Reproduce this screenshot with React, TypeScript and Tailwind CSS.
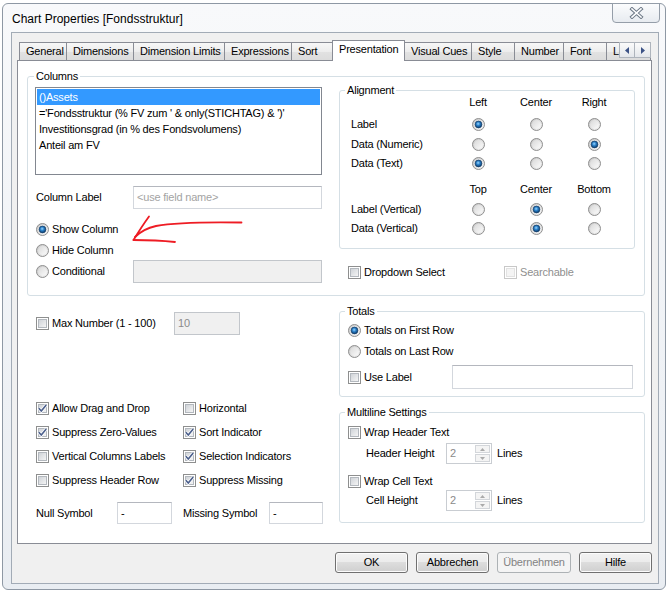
import type { ReactNode } from 'react';

// shared svg gradients for the win7 style radios / checkboxes
function Defs() {
    return (
        <svg width="0" height="0" className="block h-0 w-0">
            <defs>
                <linearGradient id="radioFill" x1="0" y1="0" x2="1" y2="1">
                    <stop offset="0" stopColor="#c4c4c4" />
                    <stop offset="1" stopColor="#f6f6f6" />
                </linearGradient>
                <linearGradient id="radioInner" x1="0" y1="0" x2="1" y2="1">
                    <stop offset="0" stopColor="#d9d9d9" />
                    <stop offset="1" stopColor="#fbfbfb" />
                </linearGradient>
                <radialGradient id="radioDot" cx="0.45" cy="0.4" r="0.6">
                    <stop offset="0" stopColor="#9ad6ff" />
                    <stop offset="0.45" stopColor="#2a80c8" />
                    <stop offset="1" stopColor="#0b3866" />
                </radialGradient>
                <linearGradient id="checkFill" x1="0" y1="0" x2="1" y2="1">
                    <stop offset="0" stopColor="#cdd1d6" />
                    <stop offset="1" stopColor="#f7f7f7" />
                </linearGradient>
            </defs>
        </svg>
    );
}

function Radio({ on = false }: { on?: boolean }) {
    return (
        <svg width="13" height="13" viewBox="0 0 13 13" className="shrink-0">
            <circle cx="6.5" cy="6.5" r="6" fill="url(#radioFill)" stroke="#8f8f8f" />
            <circle cx="6.5" cy="6.5" r="4.4" fill="url(#radioInner)" />
            {on && <circle cx="6.5" cy="6.5" r="3.4" fill="url(#radioDot)" stroke="#153f6c" strokeWidth="0.7" />}
        </svg>
    );
}

function Check({ on = false, disabled = false }: { on?: boolean; disabled?: boolean }) {
    return (
        <svg width="13" height="13" viewBox="0 0 13 13" className="shrink-0">
            <rect x="0.5" y="0.5" width="12" height="12" fill="#fff" stroke={disabled ? '#c8c8c8' : '#8e8f8f'} />
            <rect
                x="2.5"
                y="2.5"
                width="8"
                height="8"
                fill={disabled ? '#f4f4f4' : 'url(#checkFill)'}
                stroke={disabled ? '#e2e2e2' : '#b3b8be'}
            />
            {on && <path d="M2.8 6.3 L5.3 9.1 L10.2 3" fill="none" stroke="#fff" strokeWidth="3" />}
            {on && <path d="M2.8 6.3 L5.3 9.1 L10.2 3" fill="none" stroke="#4b5f8c" strokeWidth="1.6" />}
        </svg>
    );
}

function Input({ className, children, disabled = false }: { className: string; children?: ReactNode; disabled?: boolean }) {
    return (
        <div
            className={`flex shrink-0 items-center border pl-[3px] ${disabled
                ? 'border-[#c2c6cb] bg-[#f0f0f0] text-[#8a8a8a]'
                : 'border-[#d3d7dd] border-t-[#b4b7be] bg-white'
                } ${className}`}
        >
            {children}
        </div>
    );
}

function Spinner() {
    return (
        <div className="flex h-[21px] w-[46px] shrink-0 border border-[#c9cdd2] bg-white">
            <span className="flex-1 pl-[3px] pt-[3px] text-[#8a8a8a]">2</span>
            <div className="flex w-[17px] flex-col gap-[1px] p-[1px]">
                <div className="flex flex-1 items-center justify-center border border-[#d3d6da] bg-[#f4f4f4]">
                    <svg width="5" height="3" viewBox="0 0 5 3">
                        <path d="M0 3 L2.5 0 L5 3Z" fill="#aaaaaa" />
                    </svg>
                </div>
                <div className="flex flex-1 items-center justify-center border border-[#d3d6da] bg-[#f4f4f4]">
                    <svg width="5" height="3" viewBox="0 0 5 3">
                        <path d="M0 0 L2.5 3 L5 0Z" fill="#aaaaaa" />
                    </svg>
                </div>
            </div>
        </div>
    );
}

const tabs: { label: string; w: string; active?: boolean }[] = [
    { label: 'General', w: 'w-[48px]' },
    { label: 'Dimensions', w: 'w-[68px]' },
    { label: 'Dimension Limits', w: 'w-[92px]' },
    { label: 'Expressions', w: 'w-[68px]' },
    { label: 'Sort', w: 'w-[42px]' },
    { label: 'Presentation', w: 'w-[73px]', active: true },
    { label: 'Visual Cues', w: 'w-[68px]' },
    { label: 'Style', w: 'w-[44px]' },
    { label: 'Number', w: 'w-[50px]' },
    { label: 'Font', w: 'w-[44px]' },
];

function TabStrip() {
    return (
        <div className="relative flex h-[20px] w-[635px] shrink-0 items-end pl-[2px]">
            {tabs.map((t, i) =>
                t.active ? (
                    <div
                        key={t.label}
                        className={`${t.w} relative z-10 -mb-[1px] -ml-[1px] flex h-[21px] shrink-0 items-center whitespace-nowrap border border-b-0 border-[#898c95] bg-white pb-[3px] pl-[6px]`}
                    >
                        {t.label}
                    </div>
                ) : (
                    <div
                        key={t.label}
                        className={`${t.w} ${i === 0 ? '' : '-ml-[1px]'} flex h-[18px] shrink-0 items-center whitespace-nowrap border border-b-0 border-[#898c95] bg-[linear-gradient(to_bottom,#f7f7f7_0%,#ededed_50%,#e2e2e2_50%,#dcdcdc_100%)] pl-[6px]`}
                    >
                        {t.label}
                    </div>
                )
            )}
            <div className="-ml-[1px] flex h-[18px] w-[45px] shrink-0 items-center overflow-hidden whitespace-nowrap border border-b-0 border-[#898c95] bg-[linear-gradient(to_bottom,#f7f7f7_0%,#ededed_50%,#e2e2e2_50%,#dcdcdc_100%)] pl-[6px]">
                Layout
            </div>
            {/* scroll arrows sit over the clipped tab */}
            <div className="absolute right-[1px] top-[2px] z-20 flex">
                <div className="flex h-[16px] w-[16px] items-center justify-center border border-[#aeb4bc] bg-[linear-gradient(to_bottom,#fbfbfb,#e4e7eb)]">
                    <svg width="4" height="7" viewBox="0 0 4 7">
                        <path d="M4 0 L0 3.5 L4 7Z" fill="#3c5286" />
                    </svg>
                </div>
                <div className="flex h-[16px] w-[16px] items-center justify-center border border-l-0 border-[#aeb4bc] bg-[linear-gradient(to_bottom,#fbfbfb,#e4e7eb)]">
                    <svg width="4" height="7" viewBox="0 0 4 7">
                        <path d="M0 0 L4 3.5 L0 7Z" fill="#3c5286" />
                    </svg>
                </div>
            </div>
        </div>
    );
}

function AlignRow({ label, sel, h }: { label: string; sel: number; h: string }) {
    return (
        <div className={`flex ${h} items-center`}>
            <span className="w-[98px]">{label}</span>
            {[0, 1, 2].map((i) => (
                <div key={i} className="flex w-[58px] justify-center">
                    <Radio on={i === sel} />
                </div>
            ))}
        </div>
    );
}

function AlignHead({ cols, className }: { cols: string[]; className: string }) {
    return (
        <div className={`flex items-center ${className}`}>
            <span className="w-[98px]" />
            {cols.map((c) => (
                <span key={c} className="w-[58px] text-center">
                    {c}
                </span>
            ))}
        </div>
    );
}

function ColumnsGroup() {
    const rows = [
        "()Assets",
        "='Fondsstruktur (% FV zum ' & only(STICHTAG) & ')'",
        'Investitionsgrad (in % des Fondsvolumens)',
        'Anteil am FV',
    ];
    return (
        <fieldset className="w-[618px] rounded-[3px] border border-[#d5dfe5]">
            <legend className="ml-[6px] px-[2px] leading-[13px]">Columns</legend>
            <div className="flex h-[212px]">
                {/* left: list + label + visibility */}
                <div className="flex w-[294px] flex-col pl-[7px]">
                    <div className="mt-[4px] h-[88px] w-[287px] border border-[#828790] bg-white p-[1px]">
                        {rows.map((r, i) => (
                            <div
                                key={r}
                                className={`h-[16px] whitespace-nowrap pl-[2px] leading-[16px] ${i === 0 ? 'bg-[#3399ff] text-white' : ''}`}
                            >
                                {r}
                            </div>
                        ))}
                    </div>
                    <div className="mt-[11px] flex h-[23px] items-center">
                        <span className="w-[98px] pl-[1px]">Column Label</span>
                        <Input className="h-[23px] w-[189px] text-[#a3a3a3]">&lt;use field name&gt;</Input>
                    </div>
                    <div className="mt-[10px] flex h-[21px] items-center gap-[3px] pl-[1px]">
                        <Radio on />
                        <span>Show Column</span>
                    </div>
                    <div className="flex h-[20px] items-center gap-[3px] pl-[1px]">
                        <Radio />
                        <span>Hide Column</span>
                    </div>
                    <div className="flex h-[23px] items-center">
                        <div className="flex w-[98px] items-center gap-[3px] pl-[1px]">
                            <Radio />
                            <span>Conditional</span>
                        </div>
                        <Input disabled className="h-[23px] w-[189px]" />
                    </div>
                </div>

                {/* right: alignment */}
                <div className="ml-[17px] flex w-[296px] flex-col">
                    <fieldset className="mt-[1px] w-[296px] rounded-[3px] border border-[#d5dfe5] pb-[10px]">
                        <legend className="ml-[5px] px-[2px] leading-[13px]">Alignment</legend>
                        <div className="flex flex-col pl-[11px]">
                            <AlignHead cols={['Left', 'Center', 'Right']} className="h-[11px]" />
                            <div className="mt-[6px]" />
                            <AlignRow label="Label" sel={0} h="h-[20px]" />
                            <AlignRow label="Data (Numeric)" sel={2} h="h-[20px]" />
                            <AlignRow label="Data (Text)" sel={0} h="h-[19px]" />
                            <AlignHead cols={['Top', 'Center', 'Bottom']} className="mt-[10px] h-[12px]" />
                            <div className="mt-[5px]" />
                            <AlignRow label="Label (Vertical)" sel={1} h="h-[19px]" />
                            <AlignRow label="Data (Vertical)" sel={1} h="h-[19px]" />
                        </div>
                    </fieldset>
                    <div className="mt-[16px] flex h-[15px] items-center pl-[9px]">
                        <div className="flex w-[156px] items-center gap-[3px]">
                            <Check />
                            <span>Dropdown Select</span>
                        </div>
                        <div className="flex items-center gap-[3px] text-[#8f8f8f]">
                            <Check disabled />
                            <span>Searchable</span>
                        </div>
                    </div>
                </div>
            </div>
        </fieldset>
    );
}

const flags: { label: string; on: boolean }[] = [
    { label: 'Allow Drag and Drop', on: true },
    { label: 'Horizontal', on: false },
    { label: 'Suppress Zero-Values', on: true },
    { label: 'Sort Indicator', on: true },
    { label: 'Vertical Columns Labels', on: false },
    { label: 'Selection Indicators', on: true },
    { label: 'Suppress Header Row', on: false },
    { label: 'Suppress Missing', on: true },
];

function LowerLeft() {
    return (
        <div className="flex w-[312px] flex-col pl-[9px]">
            <div className="mt-[16px] flex h-[23px] items-center">
                <div className="flex w-[138px] items-center gap-[3px]">
                    <Check />
                    <span>Max Number (1 - 100)</span>
                </div>
                <Input disabled className="h-[23px] w-[66px]">
                    10
                </Input>
            </div>
            <div className="mt-[61px] grid grid-cols-[147px_1fr]">
                {flags.map((f) => (
                    <div key={f.label} className="flex h-[24px] items-center gap-[3px]">
                        <Check on={f.on} />
                        <span>{f.label}</span>
                    </div>
                ))}
            </div>
            <div className="mt-[10px] flex h-[22px] items-center">
                <span className="w-[81px]">Null Symbol</span>
                <Input className="h-[22px] w-[55px]">-</Input>
                <span className="ml-[11px] w-[86px]">Missing Symbol</span>
                <Input className="h-[22px] w-[54px]">-</Input>
            </div>
        </div>
    );
}

function LowerRight() {
    return (
        <div className="flex w-[306px] flex-col">
            <fieldset className="mt-[9px] rounded-[3px] border border-[#d5dfe5] pb-[7px] pl-[8px]">
                <legend className="ml-[-3px] px-[2px] leading-[13px]">Totals</legend>
                <div className="mt-[2px] flex h-[21px] items-center gap-[3px]">
                    <Radio on />
                    <span>Totals on First Row</span>
                </div>
                <div className="flex h-[21px] items-center gap-[3px]">
                    <Radio />
                    <span>Totals on Last Row</span>
                </div>
                <div className="mt-[3px] flex h-[24px] items-center">
                    <div className="flex w-[104px] items-center gap-[3px]">
                        <Check />
                        <span>Use Label</span>
                    </div>
                    <Input className="h-[24px] w-[181px]" />
                </div>
            </fieldset>
            <fieldset className="mt-[9px] rounded-[3px] border border-[#d5dfe5] pb-[11px] pl-[8px]">
                <legend className="ml-[-3px] px-[2px] leading-[13px]">Multiline Settings</legend>
                <div className="mt-[6px] flex h-[15px] items-center gap-[3px]">
                    <Check />
                    <span>Wrap Header Text</span>
                </div>
                <div className="mt-[3px] flex h-[21px] items-center pl-[18px]">
                    <span className="w-[80px]">Header Height</span>
                    <Spinner />
                    <span className="ml-[5px]">Lines</span>
                </div>
                <div className="mt-[10px] flex h-[15px] items-center gap-[3px]">
                    <Check />
                    <span>Wrap Cell Text</span>
                </div>
                <div className="mt-[1px] flex h-[21px] items-center pl-[18px]">
                    <span className="w-[80px]">Cell Height</span>
                    <Spinner />
                    <span className="ml-[5px]">Lines</span>
                </div>
            </fieldset>
        </div>
    );
}

function Button({ label, w, disabled = false }: { label: string; w: string; disabled?: boolean }) {
    return (
        <div
            className={`${w} flex h-[21px] items-center justify-center rounded-[3px] border ${disabled
                ? 'border-[#adb2b5] bg-[#f4f4f4] text-[#838383]'
                : 'border-[#707070] bg-[linear-gradient(to_bottom,#f2f2f2_0%,#ebebeb_50%,#dddddd_50%,#cfcfcf_100%)] shadow-[inset_0_0_0_1px_#fcfcfc]'
                }`}
        >
            {label}
        </div>
    );
}

export default function App() {
    return (
        <div className="relative h-[592px] w-[669px] bg-white pl-[2px] pt-[3px] font-['Liberation_Sans',Arial,sans-serif] text-[11px] leading-[13px] tracking-[-0.2px] text-black">
            <Defs />
            <div className="flex h-[587px] w-[664px] flex-col rounded-[6px] border border-[#8e98a4] bg-[linear-gradient(to_bottom,#f8f9fb,#e9edf2)] pb-[5px] pl-[8px] pr-[6px]">
                {/* title bar */}
                <div className="flex h-[28px] shrink-0 items-start justify-between">
                    <span className="ml-[1px] mt-[8px] text-[12px] leading-[14px] tracking-normal">Chart Properties [Fondsstruktur]</span>
                    <div className="-mr-[1px] -mt-[1px] flex h-[20px] w-[48px] items-center justify-center rounded-b-[4px] border border-[#959ea9] bg-[linear-gradient(to_bottom,#fbfcfd,#e7ebf0)]">
                        <svg width="15" height="12" viewBox="0 0 15 12">
                            <path d="M3 2 L12 10 M12 2 L3 10" stroke="#6d7987" strokeWidth="3.6" strokeLinecap="square" />
                            <path d="M3 2 L12 10 M12 2 L3 10" stroke="#fff" strokeWidth="1.6" strokeLinecap="square" />
                        </svg>
                    </div>
                </div>

                {/* client area */}
                <div className="flex h-[552px] w-[648px] flex-col border border-[#a2abb6] bg-[#f0f0f0] pl-[5px] pr-[6px] pt-[7px]">
                    <TabStrip />
                    <div className="h-[484px] w-[635px] shrink-0 border border-[#898c95] bg-white pl-[9px] pr-[6px] pt-[9px]">
                        <ColumnsGroup />
                        <div className="flex">
                            <LowerLeft />
                            <LowerRight />
                        </div>
                    </div>
                    <div className="mt-[8px] flex justify-end gap-[8px]">
                        <Button label="OK" w="w-[73px]" />
                        <Button label="Abbrechen" w="w-[73px]" />
                        <Button label="Übernehmen" w="w-[74px]" disabled />
                        <Button label="Hilfe" w="w-[73px]" />
                    </div>
                </div>
            </div>

            {/* hand drawn red arrow on top of the dialog */}
            <svg
                className="pointer-events-none absolute left-0 top-0"
                width="669"
                height="592"
                viewBox="0 0 669 592"
            >
                <g fill="none" stroke="#ee1c24" strokeWidth="1.8" strokeLinecap="round" strokeLinejoin="round">
                    <path d="M241.5 222.5 C210 222 172 223 156 226 C147 228 140 232 135 237" />
                    <path d="M149 216.5 C145 222 139 231 133.5 240" />
                    <path d="M133.5 240 C146 240 161 240.5 175 242" />
                </g>
            </svg>
        </div>
    );
}
